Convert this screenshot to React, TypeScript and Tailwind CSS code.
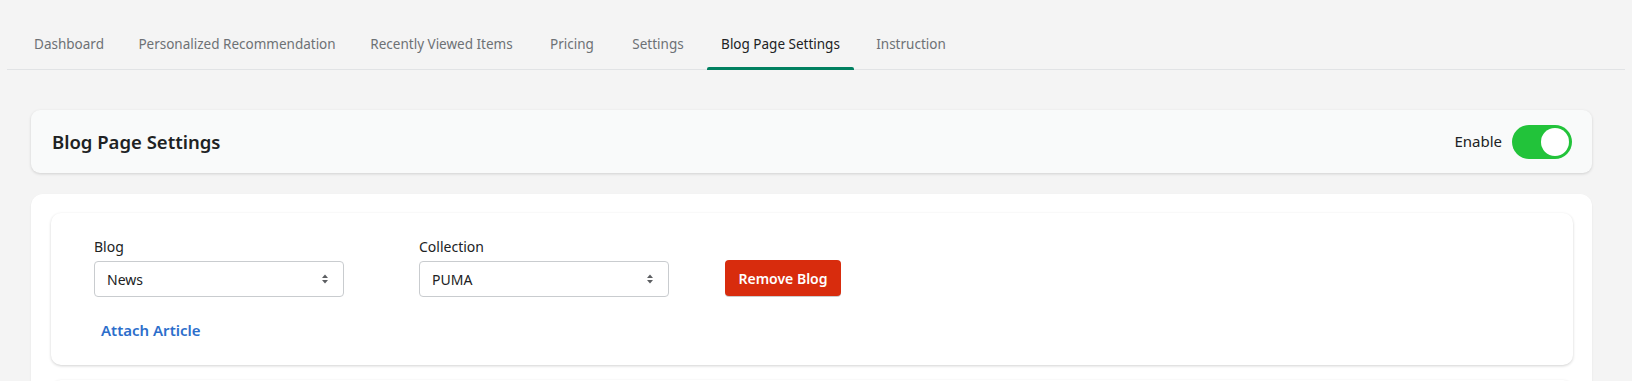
const tabs = [
  { label: "Dashboard", w: "w-[98px]" },
  { label: "Personalized Recommendation", w: "w-[222px]" },
  { label: "Recently Viewed Items", w: "w-[171px]" },
  { label: "Pricing", w: "w-[74px]" },
  { label: "Settings", w: "w-[82px]" },
  { label: "Blog Page Settings", w: "w-[147px]", active: true },
  { label: "Instruction", w: "w-[98px]" },
];

const SelectArrows = () => (
  <svg width="8" height="12" viewBox="0 0 8 12" className="shrink-0">
    <path d="M4 1.5 L7 5 H1 Z" fill="#5c5f62" />
    <path d="M4 10.5 L7 7 H1 Z" fill="#5c5f62" />
  </svg>
);

const Select = ({ label, value }: { label: string; value: string }) => (
  <div className="flex flex-col w-[250px]">
    <span className="text-[14px] leading-[20px] text-[#202223]">{label}</span>
    <div className="mt-[4px] h-[36px] flex items-center justify-between pl-[12px] pr-[14px] bg-white border border-[#c9cccf] rounded-[4px]">
      <span className="text-[14px] text-[#202223]">{value}</span>
      <SelectArrows />
    </div>
  </div>
);

const BlogItem = () => (
  <div className="bg-white rounded-[10px] shadow-[0_1px_3px_rgba(0,0,0,0.18)] pl-[43px] pt-[24px] pb-[25px]">
    <div className="flex items-end">
      <Select label="Blog" value="News" />
      <div className="ml-[75px]">
        <Select label="Collection" value="PUMA" />
      </div>
      <button className="ml-[56px] mb-[1px] h-[36px] w-[116px] rounded-[4px] bg-[#d82c0d] text-white text-[14px] font-semibold shadow-[0_1px_0_rgba(0,0,0,0.2)]">
        Remove Blog
      </button>
    </div>
    <div className="mt-[23px] pl-[7px] text-[15px] leading-[20px] font-semibold text-[#2c6ecb]">
      Attach Article
    </div>
  </div>
);

export default function App() {
  return (
    <div className="min-h-screen bg-[#f4f4f4] font-['Noto_Sans','Segoe_UI',sans-serif]">
      <div className="pt-[20px] mx-[7px]">
        <div className="flex gap-2 pl-[13px] border-b border-[#e1e3e5]">
          {tabs.map((t) => (
            <div
              key={t.label}
              className={`relative h-[49px] flex items-center justify-center shrink-0 whitespace-nowrap text-[13.5px] ${t.w} ${
                t.active ? "text-[#202223]" : "text-[#6d7175]"
              }`}
            >
              {t.label}
              {t.active && (
                <span className="absolute left-0 right-0 bottom-[-1px] h-[3px] rounded-t-[2px] bg-[#008060]" />
              )}
            </div>
          ))}
        </div>
      </div>

      <div className="ml-[31px] mr-[40px] mt-[40px]">
        <div className="h-[63px] flex items-center justify-between pl-[21px] pr-[20px] bg-[#f9fafa] rounded-[9px] shadow-[0_1px_3px_rgba(0,0,0,0.15)]">
          <h1 className="text-[18.5px] font-semibold text-[#202223]">Blog Page Settings</h1>
          <div className="flex items-center gap-[10px]">
            <span className="text-[15px] text-[#202223]">Enable</span>
            <div className="w-[60px] h-[34px] rounded-full bg-[#22c33a] p-[3px] flex justify-end">
              <div className="w-[28px] h-[28px] rounded-full bg-white" />
            </div>
          </div>
        </div>

        <div className="mt-[21px] bg-white rounded-[12px] shadow-[0_1px_2px_rgba(0,0,0,0.08)] pt-[19px] pl-[20px] pr-[19px] pb-[20px] flex flex-col gap-[15px]">
          <BlogItem />
          <div className="h-[152px] bg-white rounded-[10px] shadow-[0_1px_3px_rgba(0,0,0,0.18)]" />
        </div>
      </div>
    </div>
  );
}
